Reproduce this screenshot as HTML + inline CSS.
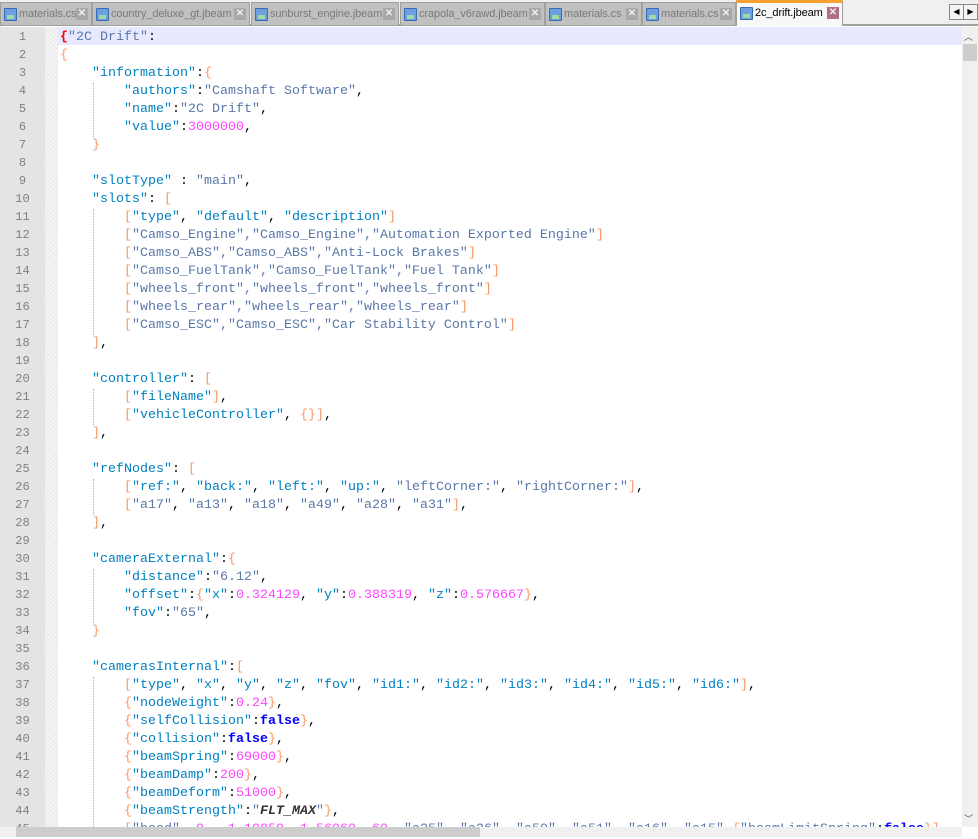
<!DOCTYPE html>
<html><head><meta charset="utf-8"><style>
*{margin:0;padding:0;box-sizing:border-box}
body{width:978px;height:837px;overflow:hidden;background:#fff;font-family:"Liberation Sans",sans-serif;position:relative}
#tabs{position:absolute;left:0;top:0;width:978px;height:26px;background:#f0f0f0;border-bottom:2px solid #a0a0a0}
.tab{position:absolute;top:2px;height:23px;background:#c0c0c0;border:1px solid #a0a0a0;border-bottom:none;font-size:11px;letter-spacing:-0.1px;color:#7a7a7a;line-height:22px;padding-left:18px;white-space:nowrap;overflow:hidden}
.tab .ic{position:absolute;left:3px;top:5px;width:13px;height:13px;background:#6aa0e0;border:1px solid #3a6ab0;border-radius:1px}
.tab .ic:after{content:"";position:absolute;left:2px;bottom:1px;width:7px;height:4px;background:#a0d8a0}
.tab .x{position:absolute;right:3px;top:5px;width:12px;height:12px;background:#a8a8a8;color:#eee;font-size:10px;line-height:12px;text-align:center;font-weight:bold;letter-spacing:0}
.tab.act{background:#f8f8f8;color:#000;top:0;height:26px;border-top:3px solid #f8a030;line-height:21px}
.tab.act .x{background:#b07080;top:4px}
.tab.act .ic{top:4px}
.sb{position:absolute;top:4px;width:15px;height:16px;background:#f4f4f4;border:1px solid #888;font-size:8px;text-align:center;line-height:14px}
#gut{position:absolute;left:0;top:27px;width:45px;height:800px;background:#e4e4e4}
#fold{position:absolute;left:45px;top:27px;width:13px;height:800px;background-color:#f4f4f4;background-image:repeating-linear-gradient(45deg,#e8e8e8 0 1px,transparent 1px 3px)}
#hl{position:absolute;left:58px;top:27px;width:904px;height:18px;background:#e8e8ff}
.ln{position:absolute;left:0;width:45px;text-align:center;font:12px "Liberation Mono",monospace;color:#808080;height:18px;line-height:18px}
.cl{position:absolute;left:60px;height:18px;line-height:18px;font-family:"Liberation Mono",monospace;font-size:13.33px;white-space:pre;color:#000}
.k{color:#0080c0}.v{color:#5a78a8}.b{color:#f89868}.n{color:#ff44ff}.f{color:#0000ff;font-weight:bold}.r{color:#ff0000;font-weight:bold}.m{color:#333;font-weight:bold;font-style:italic}
.g{position:absolute;border-left:1px dotted #b0b0b0;width:0}
#vs{position:absolute;left:962px;top:27px;width:16px;height:800px;background:#f0f0f0}
#hs{position:absolute;left:0;top:827px;width:962px;height:10px;background:#f0f0f0}
</style></head><body>
<div id="tabs">
<div class="tab" style="left:0;width:92px"><span class="ic"></span>materials.cs<span class="x">✕</span></div>
<div class="tab" style="left:92px;width:158px"><span class="ic"></span>country_deluxe_gt.jbeam<span class="x">✕</span></div>
<div class="tab" style="left:251px;width:148px"><span class="ic"></span>sunburst_engine.jbeam<span class="x">✕</span></div>
<div class="tab" style="left:400px;width:145px"><span class="ic"></span>crapola_v6rawd.jbeam<span class="x">✕</span></div>
<div class="tab" style="left:545px;width:97px"><span class="ic"></span>materials.cs<span class="x">✕</span></div>
<div class="tab" style="left:642px;width:94px"><span class="ic"></span>materials.cs<span class="x">✕</span></div>
<div class="tab act" style="left:736px;width:107px"><span class="ic"></span>2c_drift.jbeam<span class="x">✕</span></div>
<div class="sb" style="left:949px">◀</div><div class="sb" style="left:963px">▶</div>
</div>
<div id="gut"></div><div id="fold"></div><div id="hl"></div>
<div id="vs"><div style="position:absolute;left:2px;top:3px;font-size:9px;color:#555">︿</div><div style="position:absolute;left:1px;top:17px;width:14px;height:17px;background:#cdcdcd"></div><div style="position:absolute;left:2px;bottom:2px;font-size:9px;color:#555">﹀</div></div>
<div class="g" style="left:93px;top:83px;height:54px"></div>
<div class="g" style="left:93px;top:209px;height:126px"></div>
<div class="g" style="left:93px;top:389px;height:36px"></div>
<div class="g" style="left:93px;top:479px;height:36px"></div>
<div class="g" style="left:93px;top:569px;height:54px"></div>
<div class="g" style="left:93px;top:677px;height:150px"></div>
<div id="code"></div>
<div id="hs"><div style="position:absolute;left:16px;top:0;width:464px;height:10px;background:#cdcdcd"></div></div>
<script>
var L=[
'<span class="r">{</span><span class="v">"2C Drift"</span>:',
'<span class="b">{</span>',
'    <span class="k">"information"</span>:<span class="b">{</span>',
'        <span class="k">"authors"</span>:<span class="v">"Camshaft Software"</span>,',
'        <span class="k">"name"</span>:<span class="v">"2C Drift"</span>,',
'        <span class="k">"value"</span>:<span class="n">3000000</span>,',
'    <span class="b">}</span>',
'',
'    <span class="k">"slotType"</span> : <span class="v">"main"</span>,',
'    <span class="k">"slots"</span>: <span class="b">[</span>',
'        <span class="b">[</span><span class="k">"type"</span>, <span class="k">"default"</span>, <span class="k">"description"</span><span class="b">]</span>',
'        <span class="b">[</span><span class="v">"Camso_Engine","Camso_Engine","Automation Exported Engine"</span><span class="b">]</span>',
'        <span class="b">[</span><span class="v">"Camso_ABS","Camso_ABS","Anti-Lock Brakes"</span><span class="b">]</span>',
'        <span class="b">[</span><span class="v">"Camso_FuelTank","Camso_FuelTank","Fuel Tank"</span><span class="b">]</span>',
'        <span class="b">[</span><span class="v">"wheels_front","wheels_front","wheels_front"</span><span class="b">]</span>',
'        <span class="b">[</span><span class="v">"wheels_rear","wheels_rear","wheels_rear"</span><span class="b">]</span>',
'        <span class="b">[</span><span class="v">"Camso_ESC","Camso_ESC","Car Stability Control"</span><span class="b">]</span>',
'    <span class="b">]</span>,',
'',
'    <span class="k">"controller"</span>: <span class="b">[</span>',
'        <span class="b">[</span><span class="k">"fileName"</span><span class="b">]</span>,',
'        <span class="b">[</span><span class="k">"vehicleController"</span>, <span class="b">{}</span><span class="b">]</span>,',
'    <span class="b">]</span>,',
'',
'    <span class="k">"refNodes"</span>: <span class="b">[</span>',
'        <span class="b">[</span><span class="k">"ref:"</span>, <span class="k">"back:"</span>, <span class="k">"left:"</span>, <span class="k">"up:"</span>, <span class="v">"leftCorner:"</span>, <span class="v">"rightCorner:"</span><span class="b">]</span>,',
'        <span class="b">[</span><span class="v">"a17"</span>, <span class="v">"a13"</span>, <span class="v">"a18"</span>, <span class="v">"a49"</span>, <span class="v">"a28"</span>, <span class="v">"a31"</span><span class="b">]</span>,',
'    <span class="b">]</span>,',
'',
'    <span class="k">"cameraExternal"</span>:<span class="b">{</span>',
'        <span class="k">"distance"</span>:<span class="v">"6.12"</span>,',
'        <span class="k">"offset"</span>:<span class="b">{</span><span class="k">"x"</span>:<span class="n">0.324129</span>, <span class="k">"y"</span>:<span class="n">0.388319</span>, <span class="k">"z"</span>:<span class="n">0.576667</span><span class="b">}</span>,',
'        <span class="k">"fov"</span>:<span class="v">"65"</span>,',
'    <span class="b">}</span>',
'',
'    <span class="k">"camerasInternal"</span>:<span class="b">[</span>',
'        <span class="b">[</span><span class="k">"type"</span>, <span class="k">"x"</span>, <span class="k">"y"</span>, <span class="k">"z"</span>, <span class="k">"fov"</span>, <span class="k">"id1:"</span>, <span class="k">"id2:"</span>, <span class="k">"id3:"</span>, <span class="k">"id4:"</span>, <span class="k">"id5:"</span>, <span class="k">"id6:"</span><span class="b">]</span>,',
'        <span class="b">{</span><span class="k">"nodeWeight"</span>:<span class="n">0.24</span><span class="b">}</span>,',
'        <span class="b">{</span><span class="k">"selfCollision"</span>:<span class="f">false</span><span class="b">}</span>,',
'        <span class="b">{</span><span class="k">"collision"</span>:<span class="f">false</span><span class="b">}</span>,',
'        <span class="b">{</span><span class="k">"beamSpring"</span>:<span class="n">69000</span><span class="b">}</span>,',
'        <span class="b">{</span><span class="k">"beamDamp"</span>:<span class="n">200</span><span class="b">}</span>,',
'        <span class="b">{</span><span class="k">"beamDeform"</span>:<span class="n">51000</span><span class="b">}</span>,',
'        <span class="b">{</span><span class="k">"beamStrength"</span>:<span class="v">"<span class="m">FLT_MAX</span>"</span><span class="b">}</span>,',
'        <span class="b">[</span><span class="v">"hood"</span>, <span class="n">0</span>, <span class="n">-1.10850</span>, <span class="n">1.56060</span>, <span class="n">60</span>, <span class="v">"a25"</span>, <span class="v">"a26"</span>, <span class="v">"a50"</span>, <span class="v">"a51"</span>, <span class="v">"a16"</span>, <span class="v">"a15"</span>,<span class="b">{</span><span class="v">"beamLimitSpring"</span>:<span class="f">false</span><span class="b">}]</span>,'
];
var h='';
for(var i=0;i<L.length;i++){var t=28+i*18;h+='<div class="ln" style="top:'+t+'px">'+(i+1)+'</div><div class="cl" style="top:'+(t+1)+'px">'+L[i]+'</div>';}
document.getElementById('code').innerHTML=h;
</script>
</body></html>
